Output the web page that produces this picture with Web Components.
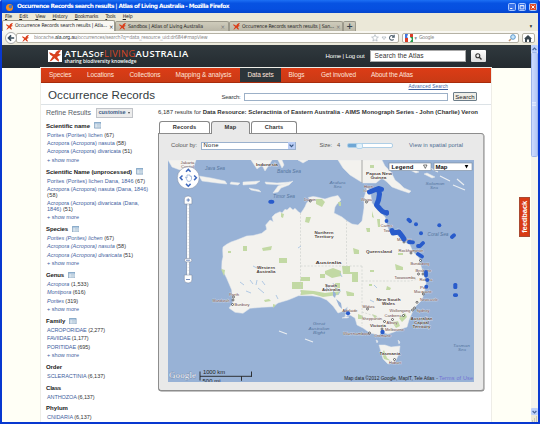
<!DOCTYPE html>
<html lang="en"><head><meta charset="utf-8"><title>Occurrence Records search results | Atlas of Living Australia</title>
<style>html,body{margin:0;width:540px;height:424px;overflow:hidden;background:#fffff6}</style></head>
<body><browser-window></browser-window>
<script>
const define = (name, html, setup) => customElements.define(name, class extends HTMLElement {
  constructor(){ super(); this.attachShadow({mode:'open'}).innerHTML = html; }
  connectedCallback(){ if (setup) setup(this, this.shadowRoot); }
});

/* Single-line label that spreads its letters over the width given in "w" */
define('fit-label', `<style>:host{display:inline-block;width:max-content;white-space:nowrap;flex:none;line-height:1}</style><slot></slot>`, el => {
  const n = el.textContent.length, w = +el.getAttribute('w');
  el.style.letterSpacing = ((w - parseFloat(getComputedStyle(el).width)) / n) + 'px';
  el.style.width = w + 'px';
});

define('ala-mark', `<style>:host{display:block;flex:none;width:7px;height:7px}svg{display:block;width:100%;height:100%}</style>
<svg viewBox="0 0 14 14"><path fill="currentColor" d="M0 2.6 3 3.4 5.4 5 7 4.8 8 2.3 11 .4 14 .2 12.4 2.6 11 4.4 14 5.6 11.2 7 9.4 8.2 11.6 11.4 11.4 13.6 8.6 11.8 6.4 9.6 3 12.6.6 13.4 2.4 10.4 4.4 7.6 1.4 5.6Z"/></svg>`);

define('title-bar', `<style>:host{display:flex;height:12.5px;align-items:center;padding:1.6px 3px 0 6px;box-sizing:border-box;background:linear-gradient(#1d70f4,#0752e2 25%,#064fe0 70%,#0646ca);color:#fff;font:bold 5.9px "DejaVu Sans",sans-serif}
.fox{width:7px;height:7px;border-radius:50%;background:radial-gradient(circle at 62% 38%,#4e79c0 0 27%,#f58d1c 32% 65%,#d14a09);margin-right:4px}
.gap{flex:1}.b{width:8px;height:8px;border:.6px solid #a9c7ff;box-sizing:border-box;border-radius:1.5px;background:#3a73ea;margin-left:2.6px}.x{background:#df4b27}svg{display:block;width:100%;height:100%}</style>
<div class="fox"></div><fit-label w="212">Occurrence Records search results | Atlas of Living Australia - Mozilla Firefox</fit-label><div class="gap"></div>
<div class="b"><svg viewBox="0 0 8 8"><path stroke="#fff" stroke-width="1.4" d="M1.5 6h3"/></svg></div><div class="b"><svg viewBox="0 0 8 8"><path fill="none" stroke="#fff" d="M1.5 2h5v4.5h-5zM1.5 2.5h5"/></svg></div><div class="b x"><svg viewBox="0 0 8 8"><path stroke="#fff" stroke-width="1.3" d="m2 2 4 4m0-4-4 4"/></svg></div>`);

define('menu-bar', `<style>:host{display:flex;height:7.5px;align-items:center;background:#ece9d8;padding-left:3px;gap:7.2px;color:#222;font:5.2px "DejaVu Sans Condensed","DejaVu Sans",sans-serif}u{text-decoration-thickness:.4px}</style>
<fit-label w="7"><u>F</u>ile</fit-label><fit-label w="9"><u>E</u>dit</fit-label><fit-label w="10"><u>V</u>iew</fit-label><fit-label w="15"><u>H</u>istory</fit-label><fit-label w="23.5"><u>B</u>ookmarks</fit-label><fit-label w="10"><u>T</u>ools</fit-label><fit-label w="10"><u>H</u>elp</fit-label>`);

define('tab-strip', `<style>:host{display:flex;height:11px;align-items:flex-end;background:#ebe8d8;color:#222;font:5.2px "DejaVu Sans Condensed","DejaVu Sans",sans-serif}
.t{display:flex;align-items:center;box-sizing:border-box;height:10px;width:114px;padding:0 3px;gap:2px;background:linear-gradient(#cfccbb,#b9b6a7);border:.5px solid #9c998b;border-bottom:0;border-radius:2px 2px 0 0}
.on{background:#f9f8f3;height:11px;width:113px}.x{margin-left:auto;color:#777;font-size:6px}.on .x{color:#333}.p{width:13px;font:bold 8px "DejaVu Sans",sans-serif;justify-content:center;color:#33424f}ala-mark{color:#db3d18}.more{margin-left:auto;padding:0 6px 2px 0}</style>
<div class="t on"><ala-mark></ala-mark><fit-label w="92">Occurrence Records search results | Atla...</fit-label><span class="x">×</span></div>
<div class="t"><ala-mark></ala-mark><fit-label w="75">Sandbox | Atlas of Living Australia</fit-label><span class="x">×</span></div>
<div class="t"><ala-mark></ala-mark><fit-label w="92">Occurrence Records search results | San...</fit-label><span class="x">×</span></div><div class="t p">+</div><span class="more">▾</span>`);

define('location-bar', `<style>:host{display:flex;height:14px;box-sizing:border-box;align-items:center;padding:0 3.5px 0 3px;background:linear-gradient(#f9f8f3,#ebe8d9);font:5.3px "DejaVu Sans Condensed","DejaVu Sans",sans-serif;color:#888}
.back{width:12px;height:12px;box-sizing:border-box;border:.6px solid #aaa;border-radius:50%;background:#fff;z-index:1}svg{display:block}
.f{display:flex;align-items:center;height:10px;box-sizing:border-box;border:.6px solid #b5b2a5;border-radius:2px;background:#fff}
.u{flex:1;padding:0 2px 0 5px;margin-left:-1px;gap:5px}.u ala-mark{color:#db3d18}b{color:#222;font-weight:400}.s{width:117px;padding:0 2px;margin-left:3px;gap:2px}.h{width:13px;margin-left:3px;justify-content:center}.gap{flex:1}</style>
<div class="back"><svg viewBox="0 0 11 11"><path fill="none" stroke="#394b5a" stroke-width="1.8" d="M9 5.5H3M5.6 2.6 2.7 5.5l2.9 2.9"/></svg></div>
<div class="f u"><ala-mark></ala-mark><fit-label w="173.5">biocache.<b>ala.org.au</b>/occurrences/search?q=data_resource_uid:dr684#mapView</fit-label><div class="gap"></div>
<svg width="25" height="8" viewBox="0 0 25 8"><path fill="#fff" stroke="#a8b1ba" stroke-width=".7" d="m4 .7 1 2.2 2.4.2-1.9 1.6.6 2.4L4 5.8 1.9 7.1l.6-2.4L.6 3.1 3 2.9Z"/><path fill="none" stroke="#a5afb8" stroke-width=".7" d="M11 3h4l-2 2.5Z"/><path fill="none" stroke="#526370" stroke-width="1.1" d="M22.6 5.3A2.3 2.3 0 1 1 22.4 2.2L23 3M23.2.8v2.3h-2.2"/></svg></div>
<div class="f s"><svg width="8" height="8" viewBox="0 0 8 8"><path fill="#4175dd" d="M0 0h4v4H0z"/><path fill="#db3d29" d="M4 0h4v3H4zM0 4h3v4H0z"/><path fill="#269c4a" d="M4 3h4v5H4z"/><path fill="#fff" d="M3 0h2v3l2 2-2 3H3l1-3-2-2z"/></svg><span>▾</span><fit-label w="15">Google</fit-label><div class="gap"></div><svg width="8" height="8" viewBox="0 0 8 8"><path stroke="#bf936e" stroke-width="1.6" d="m1 7 2-2"/><circle cx="5" cy="3" r="2.3" fill="#c8e5fa" stroke="#5b97c9"/></svg></div>
<div class="f h"><svg width="8" height="7" viewBox="0 0 8 7"><path fill="#38454d" d="M4 0 0 3.7h1V7h2V4.5h2V7h2V3.7h1Z"/></svg></div>`);

define('site-header', `<style>:host{display:flex;height:23px;box-sizing:border-box;align-items:center;padding:0 45px 1px 46px;background:linear-gradient(#30393e,#242b30);color:#fff;font:6px "Liberation Sans",Arial,sans-serif}
.logo{width:14px;height:12px;background:#fff;display:grid;place-items:center;margin-right:2.5px;flex:none}.logo ala-mark{width:14px;height:12px;color:#d8401d}
.brand{display:flex;flex-direction:column;line-height:1;margin-top:-1px}.n{font:600 9.4px "Open Sans","Noto Sans",sans-serif}.n s{text-decoration:none;font-size:7px}.n i{font-style:normal;color:#d64524;font-weight:400}.sub{font:600 4.8px "Open Sans",sans-serif;margin-top:-1.2px}
.gap{flex:1}.q{display:flex;align-items:center;width:96px;height:11.5px;box-sizing:border-box;background:#fff;color:#333;padding-left:4px;margin:0 5px;font-size:6.6px;border:.5px solid #aaa}.go{width:15px;height:12px;background:linear-gradient(#fff,#ddd);border-radius:1px;display:grid;place-items:center}</style>
<div class="logo"><ala-mark></ala-mark></div><div class="brand"><fit-label class="n" w="124">ATLAS<s>OF</s><i>LIVING</i>AUSTRALIA</fit-label><fit-label class="sub" w="72">sharing biodiversity knowledge</fit-label></div><div class="gap"></div><fit-label w="39">Home | Log out</fit-label><div class="q"><fit-label w="49">Search the Atlas</fit-label></div><div class="go"><svg width="7" height="7" viewBox="0 0 7 7"><circle cx="2.8" cy="2.8" r="2" fill="none" stroke="#333" stroke-width="1.1"/><path stroke="#333" stroke-width="1.3" d="m4.3 4.3 2.2 2.2"/></svg></div>`);

define('site-nav', `<style>:host{display:flex;height:15.3px;background:linear-gradient(#dc3c16,#c93a15);border-bottom:.6px solid #a82b0c;box-sizing:border-box;color:#ffe4db;font:6.5px "Liberation Sans",Arial,sans-serif}div{display:flex;align-items:center;padding:1.2px 0 0 8px;box-sizing:border-box}.on{background:#2c353a}</style>
<div style="width:38px"><fit-label w="22.5">Species</fit-label></div><div style="width:42.5px"><fit-label w="27">Locations</fit-label></div><div style="width:46px"><fit-label w="31">Collections</fit-label></div><div style="width:72px"><fit-label w="56">Mapping &amp; analysis</fit-label></div><div class="on" style="width:41px"><fit-label w="26">Data sets</fit-label></div><div style="width:32.5px"><fit-label w="16">Blogs</fit-label></div><div style="width:50px"><fit-label w="35">Get involved</fit-label></div><div><fit-label w="42">About the Atlas</fit-label></div>`);

define('page-heading', `<style>:host{display:flex;height:22.2px;box-sizing:border-box;border-bottom:1px solid #dce2e6;padding:0 14px 0 7px;color:#333a40;font:6px "Liberation Sans",Arial,sans-serif;justify-content:space-between}
.h{font-size:11.6px;line-height:1;padding-top:5.8px}.r{display:flex;flex-direction:column;align-items:flex-end;padding-top:2.2px}.a{font-size:4.7px;color:#3f62a0;text-decoration:underline;text-decoration-thickness:.4px;margin-right:29px}.l{display:flex;align-items:center;margin-top:2.2px}.in{width:204.5px;height:8.5px;box-sizing:border-box;border:.8px solid #9cb0c7;background:#fff;margin:0 5px 0 3px}.b{width:24px;height:9px;box-sizing:border-box;border:.7px solid #6c7d8a;border-radius:1px;background:#efeee7;display:grid;place-items:center;color:#222}</style>
<div class="h"><fit-label w="107">Occurrence Records</fit-label></div><div class="r"><fit-label class="a" w="39.5">Advanced Search</fit-label><div class="l"><fit-label w="19">Search:</fit-label><div class="in"></div><div class="b"><fit-label w="19.5">Search</fit-label></div></div></div>`);

/* Group of filter values; each line of an item may hold a link and a count */
define('facet-group', `<style>:host{display:block;font:5.5px "Liberation Sans",Arial,sans-serif;color:#333}.h{display:flex;align-items:center;height:12.25px;padding-top:1px;box-sizing:border-box;font-weight:700;font-size:6px;gap:3.5px;color:#222}svg{display:block}
.i{padding:1.39px 0 1.39px 1px}.l{height:5.7px;display:flex;align-items:center}a{color:#3f62a0}.it a{font-style:italic}</style><div class="h"></div><div class="b"></div>`, (el, root) => {
  const d = el.data, h = root.querySelector('.h');
  h.innerHTML = `<fit-label w="${d.w}">${d.t}</fit-label>` + (d.more ? '<svg width="7.5" height="6.5" viewBox="0 0 7.5 6.5"><path fill="#eaf2fa" stroke="#6c90b2" stroke-width=".7" d="M.4.4h6.7v5.7H.4z"/><path stroke="#7ba2c7" d="M.4 1h6.7"/><path stroke="#8ea8be" stroke-width=".5" d="M1.3 2.6h1m.5 0h3.5M1.3 3.8h1m.5 0h3.5M1.3 5h1m.5 0h3.5"/></svg>' : '');
  const b = root.querySelector('.b'); if (d.it) b.className = 'b it';
  b.innerHTML = d.items.map(i => '<div class="i">' + i.map(([a,c,w]) => `<div class="l"><fit-label w="${w}"><a>${a}</a>${c}</fit-label></div>`).join('') + '</div>').join('') +
    (d.more ? '<div class="i"><div class="l"><fit-label w="32"><a style="font-style:normal">+ show more</a></fit-label></div></div>' : '');
});

const facets = [
 {t:'Scientific name',w:44,more:1,items:[[['Porites (Porites) lichen',' (67)',67]],[['Acropora (Acropora) nasuta',' (58)',79]],[['Acropora (Acropora) divaricata',' (51)',85]]]},
 {t:'Scientific Name (unprocessed)',w:86,more:1,items:[[['Porites (Porites) lichen Dana, 1846',' (67)',98]],[['Acropora (Acropora) nasuta (Dana, 1846)','',101],['','(58)',11]],[['Acropora (Acropora) divaricata (Dana,','',92],['1846)',' (51)',26]]]},
 {t:'Species',w:22,more:1,it:1,items:[[['Porites (Porites) lichen',' (67)',67]],[['Acropora (Acropora) nasuta',' (58)',79]],[['Acropora (Acropora) divaricata',' (51)',86]]]},
 {t:'Genus',w:18,more:1,it:1,items:[[['Acropora',' (1,533)',41.5]],[['Montipora',' (616)',38.5]],[['Porites',' (319)',31]]]},
 {t:'Family',w:19.5,more:1,items:[[['ACROPORIDAE',' (2,277)',58]],[['FAVIIDAE',' (1,177)',41.5]],[['PORITIDAE',' (695)',43]]]},
 {t:'Order',w:16,items:[[['SCLERACTINIA',' (6,137)',58]]]},
 {t:'Class',w:15,items:[[['ANTHOZOA',' (6,137)',47.5]]]},
 {t:'Phylum',w:22,items:[[['CNIDARIA',' (6,137)',44.5]]]}];

define('refine-panel', `<style>:host{display:block;width:117px;flex:none;box-sizing:border-box;padding-left:5px;font:7px "Liberation Sans",Arial,sans-serif;color:#59616a}.top{display:flex;height:13.4px;align-items:center;gap:4.5px}.c{display:flex;align-items:center;justify-content:center;gap:2px;width:37px;height:9.5px;box-sizing:border-box;border:.6px solid #c0c3c8;background:#ececec;font-weight:700;font-size:5.5px;color:#3b5b85;margin-top:2px}.c i{border:1.6px solid transparent;border-top:2px solid #444;margin-top:1px}</style>
<div class="top"><fit-label w="45">Refine Results</fit-label><div class="c"><fit-label w="27">customise</fit-label><i></i></div></div>`, (el, root) => facets.forEach(f => { const g = document.createElement('facet-group'); g.data = f; root.append(g); }));

define('map-toolbar', `<style>:host{display:flex;height:26px;align-items:center;padding:0 0 2px 12px;box-sizing:border-box;font:5.8px "Liberation Sans",Arial,sans-serif;color:#555}
.s{display:flex;align-items:center;justify-content:space-between;width:95px;height:8.5px;box-sizing:border-box;border:.7px solid #9bb1cd;background:#fff;color:#222;padding-left:1.5px;margin:0 23.5px 0 4px}.d{width:7px;height:7px;background:#b9cdf6;display:grid;place-items:center}.z{width:46px;height:5px;box-sizing:border-box;border-radius:2px;border:.6px solid #afcfe6;background:linear-gradient(90deg,#6fa7d5 20%,#fff 20%);margin:0 16px 0 7px;display:flex;align-items:center}.k{width:7px;height:6.5px;box-sizing:border-box;border:.6px solid #b4d5ec;border-radius:2px;background:#e3f2fb;margin-left:8px}</style>
<fit-label w="26">Colour by:</fit-label><div class="s"><fit-label w="15.5">None</fit-label><div class="d"><svg width="5" height="4"><path fill="none" stroke="#36547f" stroke-width="1.2" d="m.6.7 1.9 2 1.9-2"/></svg></div></div><fit-label w="12.5">Size:</fit-label><fit-label style="margin-left:5px" w="3">4</fit-label><div class="z"><div class="k"></div></div><fit-label style="color:#4d6c91" w="54">View in spatial portal</fit-label>`);

define('occurrence-map', `<style>:host{display:block;width:306px;height:222px;margin-left:9px}svg{display:block}text{font:4.6px "Liberation Sans",Arial,sans-serif;text-anchor:middle}.c text{font-size:4.4px;fill:#5f4038;stroke:#fff;stroke-width:.5px;stroke-opacity:.8;paint-order:stroke}.st text{fill:#4a3c38;font-weight:700;font-size:4.4px;stroke:#fff;stroke-width:.5px;paint-order:stroke}.w text{fill:#56769f;font-style:italic;font-size:5px}.w .two{font-size:3.9px}.ui text{font-weight:700;font-size:6px;fill:#111}</style>
<svg width="306" height="222" viewBox="168 160 306 222"><rect x="168" y="160" width="306" height="222" fill="#98b2d6"/>
<g fill="#f3f2ee" stroke="#e4e8ec" stroke-width=".5" stroke-linejoin="round">
<path d="M222.7 250 223 247 226.7 244.3 231 242 236.7 240 246.7 236 253 235.5 261.7 233.3 266.7 229.3 265.7 225 270 220 273.3 221.7 272 217 275 214 280 211.7 282 213 285 209.3 287 210 290 207.3 293 210 295 208.3 298.3 211.7 300.7 213.3 303 210 305 206.7 306.7 202.7 310 200 308.3 197.5 313 196.5 316.7 197 325 199 331 197 338 195.5 341 200 337 204 335 207 334 213 342 217 347 221 352 224 358 225 362 221 364 208 364 198 367 188 370 190 372 203 378 210 385 217 387 225 389 231 396 234 403 241 410 245 413 252 419 258 421 266 424 275 426 283 424 293 422 300 416 306 412 313 409 320 407 327 398 330 394 332 388 334 382 332 379 335 370 333 363 328 357 325 355 318 350 315 345 316.7 347.7 306.7 341.7 311.7 338 313 333 306 326.7 300 320 297 311.7 295.7 298.3 295.7 293 298 288 300 278 303 273 306.7 261.7 307.3 250 308.3 243 313.3 235 312.3 229 308 232.7 303.3 231.7 290 226.7 278.3 221.7 268.3 222 261 223 257Z"/>
<path d="M338 160 343 168 350 175 358 180 363 183 376 183 382 178 387 182 392 187 400 190 409 193 411 191 404 188 400 184 395 180 391 172 385 166 382 160Z"/>
<path d="M168 160h28l-2 6-4 2-10 2-8-3ZM199 176l12 2 14 3 2 3-10-1-15-2ZM231 182l9 1-2 2-8-1ZM243 182l17-1-4 3-13 1ZM265 182l12 1 13-1-6 3-18-1ZM273 193l5-7 15-5-4 4-8 3-3 4ZM249 188l10 2 2 2-10-2ZM251 160h21l-3 5-4 6-3-6-5 4ZM278 160l4 8 2-3-2-5ZM298 160l5 3 5-3ZM379 345h6l6 2 9-1-1 8-4 8-7 2-5-5ZM376 340l2 1-1 2ZM398 340l2 2-1 2ZM400 163l19 9-3 1-14-7ZM424 174l8 4 3-1-8-4ZM345 317l4 0-2 1h-5Z"/></g>
<g fill="none" stroke="#e9edf1" stroke-width="1.2"><path d="M428 167l10 5M440 176l10 5M453 185l12 5M457 179l7 6M279 331l8 3M305 339l8 3" /></g>
<g fill="#c2d9a4"><path d="M316 199h6l3 3-3 5-6-3ZM306 217h5l-2 6-4-1ZM281 213l3 1-1 4-2-1ZM262 248l10-2-1 4-8 1ZM279 258h8v5h-8ZM243 246h4v5h-4ZM292 282h11v7h-11ZM301 277h9v4h-10ZM301 290l13 1 11 2 16-2-3 4-15 2-10-3-12 1ZM325 271l8-3 8 3v5l-9 2-7-4ZM342 266h8v6h8v10h-6v-8h-9ZM353 248l6 2v4h-5ZM395 264l8 3v3h-7ZM399 318l6-5 2 4-5 5ZM392 322l6-1 2 5-4 2ZM384 350l3 8 4 3-7-2-2-6ZM366 228h4v4h-3ZM377 219h3v8h-2ZM338 202h3v4h-2ZM264 300l5-1 2 2-6 1ZM273 304l3 1-3 3ZM372 211l2 7-2-1ZM387 286l4 2-1 2h-4ZM221 269l4 1-1 6Z"/><path d="M320 274h5v4h-5zM335 283h5v5h-5zM346 291l8 2v3h-7zM358 314l5 2v3h-5zM372 314l5 2-2 3zM370 270h4v2h-4zM398 253h5v2h-5zM228 251h3v2h-3zM369 284h3v2h-3zM370 165h4v3h-4z"/></g>
<g fill="none" stroke="#c9cdca" stroke-width=".6" stroke-dasharray="2 1.5"><path d="M300.5 213v82M300.5 266h62M346.5 220v46M362 266v60M362 281h48l8-2M362 312l16 5 13 8"/><path d="M362 160v23" stroke="#777" stroke-dasharray="none"/></g>
<g fill="none" stroke="#a9c4e2" stroke-width=".9"><path d="m298 248 3-2M240 282l4 3m6-5 3 4m4-4-1 5m6-4 3 4m-7 3 6 5m-18-2 5 2m25 2 2 4M327 285l3 4m3-6 2 5m5 3-2 4M340 273l2 4M374 285l3 3M370 300l4 2M253 266l4 2"/></g>
<path fill="#98b2d6" d="m333 290 3 4-1 4-2-2ZM326 286l2 3-2 3ZM336 299l5 4 1 6-3-3Z"/>
<g id="labels"></g>
<g fill="#fff" stroke="#333" stroke-width=".7"><circle cx="310.3" cy="201" r="1"/><circle cx="366.5" cy="202" r="1"/><circle cx="404" cy="242" r="1"/><circle cx="411" cy="253" r="1"/><circle cx="420.5" cy="260.5" r="1"/><circle cx="418.5" cy="274" r="1"/><circle cx="423" cy="274" r="1"/><circle cx="423.3" cy="294" r="1"/><circle cx="417" cy="302.3" r="1"/><circle cx="414.5" cy="308" r="1"/><circle cx="412.5" cy="310" r="1"/><circle cx="403.5" cy="315.5" r="1"/><circle cx="392.5" cy="319.5" r="1"/><circle cx="384.5" cy="321.5" r="1"/><circle cx="367.5" cy="309" r="1"/><circle cx="369.5" cy="333" r="1"/><circle cx="382" cy="329" r="1"/><circle cx="394.5" cy="359.5" r="1"/><circle cx="233.5" cy="297" r="1"/><circle cx="233" cy="300" r="1"/><circle cx="232.5" cy="304.5" r="1"/></g>
<g fill="#285bcb"><ellipse cx="271.3" cy="201.7" rx="3" ry="2"/>
<g fill="none" stroke="#285bcb" stroke-linecap="round" stroke-linejoin="round"><path stroke-width="5" d="m369.5 192 5-2 4-1.500 3 .8M378.500 189l1 5-1 6-2 5 3.500 4 2.500 2.500 4 1.500M392 230.500l1 2.500 6-1 3 4 2 3"/><path stroke-width="3.800" d="m409 242 4 .4M418 246l2 0 3-3M418 254l4 2.500M408.500 219.700l1.500 1.500M452 237l2-1.700M426 272v3.500M387 212v1.500"/></g>
<circle cx="386.5" cy="221" r="1.9"/><circle cx="416" cy="224.3" r="2"/><circle cx="439.3" cy="225.3" r="2"/><circle cx="421" cy="233.3" r="2"/><circle cx="427.3" cy="280" r="2"/><circle cx="426.3" cy="286.7" r="2"/><circle cx="348" cy="313.3" r="2.1"/><circle cx="382.5" cy="332" r="2.2"/><rect x="453.3" y="283" width="4" height="6" rx="1.5"/><rect x="453" y="293.3" width="5" height="3.6" rx="1.6"/></g>
<g class="ui"><rect x="389" y="163" width="42" height="7.5" fill="#fff" stroke="#789" stroke-width=".6"/><text x="402.5" y="168.9" textLength="22">Legend</text><path fill="none" stroke="#222" stroke-width=".6" d="M423.5 165h3.500l-1.700 3.400Z"/><rect x="434" y="163" width="38" height="7.5" fill="#fff" stroke="#789" stroke-width=".6"/><text x="441.5" y="168.9" textLength="12">Map</text><path d="M464.700 165h3.600l-1.800 3.400Z"/>
<g fill="#fff" stroke="#73819b" stroke-width=".5"><circle cx="188.3" cy="177.8" r="11"/><rect x="186.8" y="203" width="2.8" height="74"/><path d="M184.300 204v-5q0-3 3.800-3t3.800 3v5ZM184.300 275h7.600v5q0 3-3.800 3t-3.800-3Z"/><rect x="184.7" y="258.5" width="7" height="3.4" rx="1.4"/></g><path fill="none" stroke="#9ba8bb" stroke-width=".5" stroke-dasharray=".6 2.5" d="M187 205h2.600M188.200 205v70"/><path fill="none" stroke="#3e68bc" stroke-width="1.5" d="m186 171.700 2.300-2.300 2.300 2.300M186 183.900l2.300 2.300 2.300-2.300M182.500 175.500l-2.300 2.300 2.300 2.300M194.100 175.500l2.300 2.300-2.300 2.300"/><path fill="none" stroke="#4f70af" stroke-width=".8" d="M186.500 200h3.500M188.200 198.300v3.500M186 279.500h4M186 260.200h4.200"/><path fill="#fff" stroke="#8aa6d2" stroke-width=".7" d="m185.500 177 1.500 1v-3h3v1.300h1.500v3l-1.300 2h-2.500Z"/></g>
<text x="182.500" y="378.300" textLength="27" style="font:9px 'Liberation Serif',serif" fill="#f3f6fa" stroke="#66799b" stroke-width=".5" paint-order="stroke">Google</text><path fill="none" stroke="#222" stroke-width=".9" d="M200 371.500v9M200 376.300h52M251.500 371.500v5M241.500 376.300v4.500"/><text x="214" y="374" textLength="22" style="font-size:5.8px" fill="#222">1000 km</text><text x="211.500" y="382.700" textLength="18" style="font-size:5.8px" fill="#222">500 mi</text>
<text x="389.300" y="380" textLength="90" lengthAdjust="spacingAndGlyphs" style="font-size:5px" fill="#222">Map data ©2012 Google, MapIT, Tele Atlas</text><text x="437" y="380" style="font-size:5px" fill="#333">-</text><text x="456" y="380" textLength="34" style="font-size:5.5px" fill="#7373d4">Terms of Use</text></svg>`, (el, root) => {
  const groups = {
   w:[['Java Sea',215,169.5,20],['Banda Sea',289,172.5,24],['Timor Sea',284,198.3,22],['Arafura',337.5,183.6,16,1],['Sea',337.5,188,8,1],['Solomon',435,185,19,1],['Sea',434,189.4,8,1],['Coral Sea',438,236,21],['Great',319,325.4,12,1],['Australian',319,329.8,21,1],['Bight',319,334.2,12,1],['Tasman',461.5,346.6,17,1],['Sea',462,351,8,1]],
   st:[['Indonesia',267,166.4,22],['Papua New',379,174.5,26],['Guinea',378.5,178.7,16],['Northern',324,234,19],['Territory',324,238.3,19],['Western',266,269,18],['Australia',266,273.3,19],['Australia',328.5,263.5,26],['Queensland',379,252.8,26],['South',331,287,12],['Australia',331,291.3,18],['New South',388.5,300.8,24],['Wales',388.5,305.2,13],['Australian',421.5,320,22],['Capital',421.5,324.2,15],['Territory',421.5,328.4,18],['Victoria',378,326.5,16],['Tasmania',390,355,21]],
   c:[['Jakarta',187.5,164.3,14],['Capital',187.5,168.2,13],['Darwin',310,200.5,12],['Horn',368.5,187.8,9],['Island',367.5,191.8,8],['Weipa',366.5,201,11],['Cairns',386.5,227,12],['Townsville',392.5,232.3,18],['Mackay',404,241,14],['Rockhampton',411,252.3,25],['Bundaberg',420,265,19],['Brisbane',423.5,272.3,16],['Toowoomba',405,279.2,21],['Robina',426,281.3,13],['Port',424,289.1,8],['Macquarie',423,293.2,18],['Newcastle',429,301.3,18],['Wollongong',400,312,21],['Sydney',423,312,13],['Canberra',393,317,17],['Albury',392,324.3,11],['Shepparton',372,320,20],['Mildura',368.5,308.3,12],['Adelaide',350,312,15],['Melbourne',394.5,331.3,19],['Warrnambool',356.5,334.5,27],['Cromane',382.5,336.8,17],['Hobart',395,363.8,12],['Perth',234,296,10],['Mandurah',221,302,17],['Bunbury',242,306.3,15]]};
  root.querySelector('#labels').innerHTML = Object.entries(groups).map(([k, a]) => `<g class="${k}">` + a.map(([t,x,y,w,two]) => `<text${two ? ' class="two"' : ''} x="${x}" y="${y}" textLength="${w}" lengthAdjust="spacingAndGlyphs">${t}</text>`).join('') + '</g>').join('');
});

define('results-panel', `<style>:host{display:block;width:326px;font:6px "Liberation Sans",Arial,sans-serif;color:#333}.r{height:15.5px;display:flex;align-items:center;box-sizing:border-box;padding-bottom:2.5px}
.tabs{display:flex;height:12px;gap:1px;align-items:flex-end;padding-left:1px;position:relative;z-index:1}.t{height:12px;box-sizing:border-box;border:.8px solid #888;border-bottom:0;border-radius:3px 3px 0 0;display:grid;place-items:center;background:#fff;font-weight:700;font-size:5.7px;color:#333}.on{background:#e9e9e9;height:13px;margin-bottom:-1px}
.p{height:258px;width:326px;box-sizing:border-box;background:#e9e9e9;border:1px solid #8d8d8d;border-right-color:#aaa;border-radius:0 3px 3px 3px;box-shadow:.5px .5px .5px #888}</style>
<div class="r"><fit-label w="320">6,187 results for <b>Data Resource: Scleractinia of Eastern Australia - AIMS Monograph Series - John (Charlie) Veron</b></fit-label></div>
<div class="tabs"><div class="t" style="width:51px"><fit-label w="23.5">Records</fit-label></div><div class="t on" style="width:39px"><fit-label w="12">Map</fit-label></div><div class="t" style="width:46px"><fit-label w="18.5">Charts</fit-label></div></div><div class="p"><map-toolbar></map-toolbar><occurrence-map></occurrence-map></div>`);

define('page-body', `<style>:host{display:block;flex:1;min-width:0;background:#fffff6;overflow:hidden;position:relative}.w{width:450px;height:354px;margin-left:39px;background:#fff;box-shadow:0 0 0 1px #eeede7}.cols{display:flex}
.fb{position:absolute;right:.3px;top:152px;width:11.3px;height:40px;background:#d93b14;border:.5px solid #a94a31;box-sizing:border-box;display:flex;align-items:center;justify-content:center;color:#fff;font:bold 7.6px "Liberation Sans",Arial,sans-serif}.fb fit-label{transform:rotate(-90deg);margin:0 -12px}</style>
<site-header></site-header><div class="w"><site-nav></site-nav><page-heading></page-heading><div class="cols"><refine-panel></refine-panel><results-panel></results-panel></div></div><div class="fb"><fit-label w="32">feedback</fit-label></div>`);

define('scroll-bar', `<style>:host{display:flex;flex-direction:column;width:7.5px;background:#f5f4ec}.b{height:7px;background:#bdd0fa;border-radius:1px;display:grid;place-items:center}.th{height:105px;background:linear-gradient(90deg,#cddbff,#b4c7f5);border:.5px solid #9eb5eb;box-sizing:border-box;border-radius:1.5px;display:grid;place-items:center}.g{flex:1}.c{height:7px;background:#ece9d8}.c svg,.b svg{display:block}</style>
<div class="b"><svg width="5" height="4"><path fill="none" stroke="#48659a" stroke-width="1.2" d="m.6 3 1.900-2 1.900 2"/></svg></div><div class="th"><svg width="4" height="5"><path stroke="#eef4ff" stroke-width=".7" d="M0 .5h4M0 2h4M0 3.500h4"/></svg></div><div class="g"></div><div class="b"><svg width="5" height="4"><path fill="none" stroke="#48659a" stroke-width="1.2" d="m.6 1 1.900 2 1.900-2"/></svg></div><div class="c"><svg width="7" height="7"><path stroke="#aaa899" stroke-dasharray="1 1" d="M1 6h6M3 4h4M5 2h2"/></svg></div>`);

define('browser-window', `<style>:host{display:flex;flex-direction:column;width:540px;height:424px;box-sizing:border-box;border:2px solid #0838d0;border-top:0;background:#fffff6;border-radius:2px 2px 0 0;overflow:hidden}title-bar{margin:0 -2px}title-bar,menu-bar,tab-strip,location-bar{flex:none}.m{display:flex;height:377px}</style>
<title-bar></title-bar><menu-bar></menu-bar><tab-strip></tab-strip><location-bar></location-bar><div class="m"><page-body></page-body><scroll-bar></scroll-bar></div>`);
</script></body></html>
